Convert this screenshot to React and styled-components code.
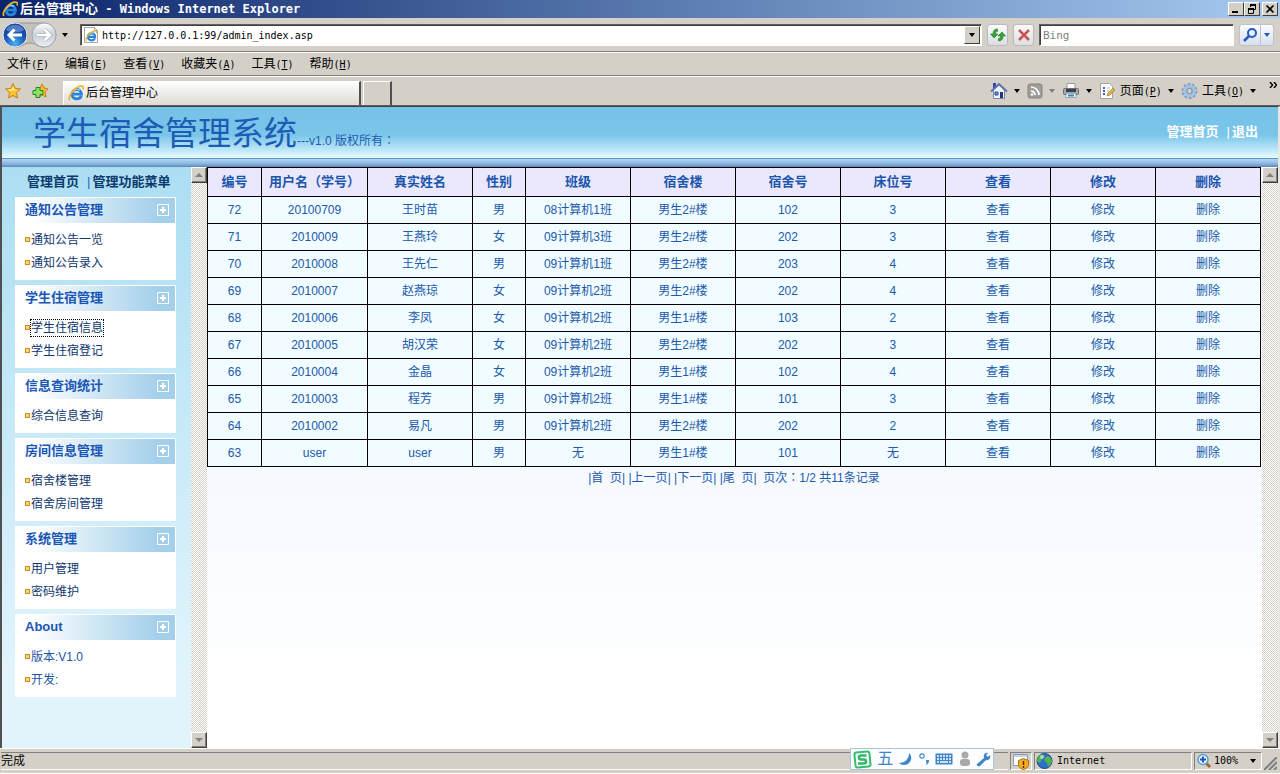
import React from 'react'
import styled, { createGlobalStyle } from 'styled-components'

const students = [
  ['72', '20100709', '王时苗', '男', '08计算机1班', '男生2#楼', '102', '3'],
  ['71', '2010009', '王燕玲', '女', '09计算机3班', '男生2#楼', '202', '3'],
  ['70', '2010008', '王先仁', '男', '09计算机1班', '男生2#楼', '203', '4'],
  ['69', '2010007', '赵燕琼', '女', '09计算机2班', '男生2#楼', '202', '4'],
  ['68', '2010006', '李凤', '女', '09计算机2班', '男生1#楼', '103', '2'],
  ['67', '2010005', '胡汉荣', '女', '09计算机2班', '男生2#楼', '202', '3'],
  ['66', '2010004', '金晶', '女', '09计算机2班', '男生1#楼', '102', '4'],
  ['65', '2010003', '程芳', '男', '09计算机2班', '男生1#楼', '101', '3'],
  ['64', '2010002', '易凡', '男', '09计算机2班', '男生2#楼', '202', '2'],
  ['63', 'user', 'user', '男', '无', '男生1#楼', '101', '无'],
]

// name and share of the table width
const columns = [
  ['编号', 54], ['用户名（学号）', 106], ['真实姓名', 105], ['性别', 53], ['班级', 105], ['宿舍楼', 105],
  ['宿舍号', 105], ['床位号', 105], ['查看', 105], ['修改', 105], ['删除', 105],
]
const totalWidth = columns.reduce((sum, [, width]) => sum + width, 0)

const groups = [
  { title: '通知公告管理', items: ['通知公告一览', '通知公告录入'] },
  { title: '学生住宿管理', items: ['学生住宿信息', '学生住宿登记'] },
  { title: '信息查询统计', items: ['综合信息查询'] },
  { title: '房间信息管理', items: ['宿舍楼管理', '宿舍房间管理'] },
  { title: '系统管理', items: ['用户管理', '密码维护'] },
]

const menus = [['文件', 'F'], ['编辑', 'E'], ['查看', 'V'], ['收藏夹', 'A'], ['工具', 'T'], ['帮助', 'H']]

export default function App() {
  return (
    <Window>
      <GlobalStyle />
      <TitleBar>
        <IeIcon size={16} />
        <Caption>后台管理中心<b> - Windows Internet Explorer</b></Caption>
        <WinButton aria-label="最小化"><svg width="14" height="12"><path d="M3 8h6v2H3z" /></svg></WinButton>
        <WinButton aria-label="还原">
          <svg width="14" height="12" fill="none" stroke="#000"><path d="M5 1.500h6M5 2.500h6M5.500 1v3M10.500 1v5.500H8M3 5.500h6M3 6.500h6M3.500 5v5.500h5V5" /></svg>
        </WinButton>
        <WinButton $apart aria-label="关闭">
          <svg width="14" height="12" stroke="#000" strokeWidth="1.700"><path d="M3.500 2.500l7 7M10.500 2.500l-7 7" /></svg>
        </WinButton>
      </TitleBar>

      <NavBar>
        <NavButtons>
          <svg width="58" height="30" viewBox="0 0 58 30">
            <defs>
              <radialGradient id="back" cx=".5" cy=".85" r=".85"><stop offset="0" stopColor="#48b4f4" /><stop offset=".5" stopColor="#1c57b8" /><stop offset="1" stopColor="#12388c" /></radialGradient>
              <linearGradient id="fwd" x2="0" y2="1"><stop offset="0" stopColor="#fff" /><stop offset=".5" stopColor="#c8ced8" /><stop offset="1" stopColor="#eef2f6" /></linearGradient>
            </defs>
            <path d="M15 3h28a12 12 0 0 1 0 24c-7 0-8-4-14-4s-7 4-14 4a12 12 0 0 1 0-24z" fill="#c4c1bc" stroke="#98948e" />
            <circle cx="14" cy="15" r="12" fill="url(#back)" stroke="#e4edf8" />
            <path d="M5 10c3-7 15-7 18 0-5 3-13 3-18 0z" fill="#7ba4dd" opacity=".6" />
            <path d="M21 15H9M13.500 9.500L8 15l5.500 5.500" fill="none" stroke="#fff" strokeWidth="3" />
            <circle cx="43" cy="15" r="12" fill="url(#fwd)" stroke="#a2a8b2" />
            <path d="M36 15h12M43.500 9.500L49 15l-5.500 5.500" fill="none" stroke="#a9b0bb" strokeWidth="4" />
            <path d="M36 15h12M43.500 9.500L49 15l-5.500 5.500" fill="none" stroke="#fff" strokeWidth="2.500" />
          </svg>
          <Arrow />
        </NavButtons>
        <AddressBox>
          <svg width="16" height="18" viewBox="0 0 16 18"><path d="M1.500 1.500h10l3 3v12h-13z" fill="#fff" stroke="#a8a8a8" /><path d="M11.500 1.500v3h3" fill="none" stroke="#a8a8a8" /></svg>
          <PageMark><IeIcon size={12} /></PageMark>
          <TextInput aria-label="地址" defaultValue="http://127.0.0.1:99/admin_index.asp" />
          <DropButton aria-label="地址列表"><Arrow /></DropButton>
        </AddressBox>
        <SoftButton aria-label="刷新">
          <svg width="16" height="16" viewBox="0 0 16 16" fill="#35a337" stroke="#1f7d28" strokeWidth=".6"><path d="M7.500 2v2.500C6 4.500 5.500 5 5.500 7H8l-4 4-3.500-4H3c0-3.500 1.500-5 4.500-5z" /><path d="M8.500 14v-2.500c1.500 0 2-.5 2-2.500H8l4-4 3.500 4H13c0 3.500-1.500 5-4.500 5z" /></svg>
        </SoftButton>
        <SoftButton aria-label="停止">
          <svg width="16" height="16" viewBox="0 0 16 16" stroke="#c85454" strokeWidth="2.500"><path d="M3 3l10 10M13 3L3 13" /></svg>
        </SoftButton>
        <SearchBox>
          <TextInput aria-label="搜索" placeholder="Bing" />
        </SearchBox>
        <SearchButtons>
          <button aria-label="搜索">
            <svg width="16" height="16" viewBox="0 0 16 16" fill="none" stroke="#2558c4" strokeWidth="2"><circle cx="10" cy="6" r="4" fill="#e6f1ff" /><path d="M7 9l-5 5" strokeWidth="2.500" /></svg>
          </button>
          <button aria-label="搜索选项"><Arrow $color="#2558c4" /></button>
        </SearchButtons>
      </NavBar>

      <MenuBar>
        {menus.map(([name, key]) => (
          <button key={key}>{name}<Latin>(<u>{key}</u>)</Latin></button>
        ))}
      </MenuBar>

      <TabBar>
        <IconButton aria-label="收藏中心"><Star /></IconButton>
        <IconButton aria-label="添加到收藏夹"><Star plus /></IconButton>
        <Tab><IeIcon size={16} />后台管理中心</Tab>
        <NewTab aria-label="新选项卡" />
        <Tools>
          <Tool aria-label="主页">
            <svg width="18" height="18" viewBox="0 0 18 18"><path d="M3 1h3v5H3z" fill="#3648b0" /><path d="M3.500 8v8.500h11V8L9 3z" fill="#eef2fa" stroke="#7b8dac" /><path d="M1 9.500L9 2l8 7.500" fill="none" stroke="#5f74a8" strokeWidth="2" /><path d="M5 10h3v3H5z" fill="#54a0dc" stroke="#334c9c" /><path d="M10 10h3v6h-3z" fill="#26337c" /></svg>
            <Arrow />
          </Tool>
          <Tool aria-label="源">
            <svg width="16" height="16" viewBox="0 0 16 16"><rect x="1" y="1" width="14" height="14" rx="2" fill="#a09e99" stroke="#85837e" /><path d="M4 4a8 8 0 0 1 8 8M4 8a4 4 0 0 1 4 4" fill="none" stroke="#fff" strokeWidth="1.700" /><circle cx="5" cy="11.500" r="1.300" fill="#fff" /></svg>
            <Arrow $color="#808080" />
          </Tool>
          <Tool aria-label="打印">
            <svg width="18" height="18" viewBox="0 0 18 18"><path d="M5 1.500h8V7H5z" fill="#fff" stroke="#999" /><rect x="1.500" y="6.500" width="15" height="6" rx="1" fill="#a4a6ae" stroke="#6e7078" /><path d="M4 7h10v3H4z" fill="#3c3e48" /><path d="M4.500 11.500h9l1 4h-11z" fill="#f3f8ff" stroke="#9aa" /><path d="M6 13.500h6" stroke="#3a80c8" strokeWidth="2" /></svg>
            <Arrow />
          </Tool>
          <Tool>
            <svg width="17" height="18" viewBox="0 0 17 18"><path d="M1.500 1.500h9l3 3v12h-12z" fill="#fff" stroke="#a3a3a8" /><path d="M4 6h2M4 9h2M4 12h2" stroke="#3d62c4" strokeWidth="2" /><path d="M8 6h3M8 9h2" stroke="#9bb6e4" /><path d="M8 14l1-3 5-5 2 2-5 5z" fill="#e2b24c" stroke="#a87a30" strokeWidth=".7" /></svg>
            <span>页面<Latin>(<u>P</u>)</Latin></span>
            <Arrow />
          </Tool>
          <Tool>
            <svg width="17" height="18" viewBox="0 0 17 18" fill="none"><circle cx="8.500" cy="9" r="7" stroke="#7d9fc1" strokeWidth="2" strokeDasharray="3 1.400" /><circle cx="8.500" cy="9" r="4.500" stroke="#a3c0dc" strokeWidth="4" /><circle cx="8.500" cy="9" r="2.700" fill="#d4d0c8" stroke="#6d8db1" /></svg>
            <span>工具<Latin>(<u>O</u>)</Latin></span>
            <Arrow />
          </Tool>
          <More aria-label="更多">
            <svg width="8" height="6" fill="none" stroke="#000" strokeWidth="1.500"><path d="M1 0l2.500 3L1 6M5 0l2.500 3L5 6" /></svg>
          </More>
        </Tools>
      </TabBar>

      <Page>
        <Banner>
          <h1>学生宿舍管理系统</h1>
          <small>---v1.0 版权所有<Punct>：</Punct></small>
          <nav><a href="#home">管理首页</a><span>|</span><a href="#exit">退出</a></nav>
        </Banner>
        <Frames>
          <Sidebar>
            <SideTop><a href="#home">管理首页</a><span>|</span><a href="#menu">管理功能菜单</a></SideTop>
            {groups.map(group => (
              <Group key={group.title}>
                <GroupTitle>{group.title}<Plus /></GroupTitle>
                <ul>
                  {group.items.map(item => (
                    <li key={item}><MenuLink href="#list" $focused={item === '学生住宿信息'}>{item}</MenuLink></li>
                  ))}
                </ul>
              </Group>
            ))}
            <Group>
              <GroupTitle>About<Plus /></GroupTitle>
              <ul>
                <li>版本:V1.0</li>
                <li>开发:</li>
              </ul>
            </Group>
          </Sidebar>
          <Scroll />
          <Main>
            <Table>
              <colgroup>
                {columns.map(([name, width]) => <Col key={name} $width={width} />)}
              </colgroup>
              <thead>
                <tr>{columns.map(([name]) => <th key={name}>{name}</th>)}</tr>
              </thead>
              <tbody>
                {students.map(row => (
                  <tr key={row[0]}>
                    {row.map((cell, i) => <td key={i}>{cell}</td>)}
                    <td><a href="#view">查看</a></td>
                    <td><a href="#edit">修改</a></td>
                    <td><a href="#delete">删除</a></td>
                  </tr>
                ))}
              </tbody>
            </Table>
            <Pager>
              |<a href="#first">首&nbsp; 页</a>| |<a href="#prev">上一页</a>| |<a href="#next">下一页</a>| |<a href="#last">尾&nbsp; 页</a>|&nbsp; 页次<Punct>：</Punct>1/2 共11条记录
            </Pager>
          </Main>
          <Scroll />
        </Frames>
      </Page>

      <StatusBar>
        <StatusText>完成</StatusText>
        <StatusPane $width={22}>
          <svg width="18" height="18" viewBox="0 0 18 18"><path d="M1.500 2.500h14v11h-14z" fill="#fff" stroke="#8b9bb4" /><path d="M2 3h13v2H2z" fill="#c7d3e6" /><path d="M11.500 6.500l5 2v4c0 3-3 4.500-5 5-2-.5-5-2-5-5v-4z" fill="#f2b01e" stroke="#b26a10" /><path d="M11.500 9v4M11.500 14v2" stroke="#5a2b00" strokeWidth="1.500" /></svg>
        </StatusPane>
        <StatusPane $width={158}>
          <svg width="17" height="16" viewBox="0 0 17 16"><circle cx="8.500" cy="8" r="7.500" fill="#2f6fce" stroke="#1c458c" /><path d="M3 3c3-3 6-1 5 1S5 6 5 8s-2 2-4 0c0-2 1-4 2-5zM10 4c3-2 5 1 6 4-1 4-3 6-4 5s0-3-2-4-2-4 0-5z" fill="#4fb64a" /><circle cx="6" cy="4" r="2" fill="#dff3ff" opacity=".6" /></svg>
          <Latin>Internet</Latin>
        </StatusPane>
        <StatusPane $width={68} $last>
          <svg width="16" height="16" viewBox="0 0 16 16"><path d="M9 9l5 5" stroke="#a56a30" strokeWidth="3" /><circle cx="7" cy="6.500" r="5" fill="#eaf5ff" stroke="#5e9bd6" strokeWidth="1.500" /><path d="M4 6.500h6M7 3.500v6" stroke="#1f54ba" strokeWidth="2" /></svg>
          <Latin>100%</Latin>
          <Arrow />
        </StatusPane>
        <Grip width="13" height="13" stroke="#808080" strokeWidth="2"><path d="M0 13L13 0M5 13l8-8M10 13l3-3" /></Grip>
        <ImeBar>
          <svg width="19" height="19" viewBox="0 0 19 19"><rect x="2" y="2" width="15" height="15" rx="2" fill="#fff" stroke="#35bd6c" strokeWidth="2" transform="rotate(-6 9.500 9.500)" /><path d="M13.500 5.500H8a2 2 0 0 0 0 4h3a2 2 0 0 1 0 4H5" fill="none" stroke="#2fb866" strokeWidth="2.600" /></svg>
          <ImeMode>五</ImeMode>
          <svg width="14" height="14" viewBox="0 0 14 14"><path d="M10 1c5 5 1 12-5 12-2 0-4-1-5-2 6 0 10-4 10-10z" fill="#3f86c9" /></svg>
          <svg width="12" height="14" viewBox="0 0 12 14"><circle cx="4" cy="4" r="2.200" fill="none" stroke="#3f86c9" strokeWidth="1.200" /><path d="M8 8h3c0 3-1 4-3 5 1-2 0-3 0-5z" fill="#3f86c9" /></svg>
          <svg width="18" height="12" viewBox="0 0 18 12"><rect x=".5" y=".5" width="17" height="11" fill="#3f86c9" /><path d="M2 3h14M2 6h14" stroke="#fff" strokeWidth="1.500" strokeDasharray="2 1" /><path d="M2 9h2M5 9h8M14 9h2" stroke="#fff" strokeWidth="1.500" /></svg>
          <svg width="12" height="16" viewBox="0 0 12 16" fill="#a9a9a9"><circle cx="6" cy="4" r="3.500" /><rect x="1" y="8" width="10" height="7" rx="3" /></svg>
          <svg width="15" height="15" viewBox="0 0 15 15"><path d="M1 12l7-6c-1-3 1-6 4-5L10 3l2 2 2-2c1 3-1 6-4 5l-6 6c-2 1-4-1-3-2z" fill="#3f86c9" /></svg>
        </ImeBar>
      </StatusBar>
    </Window>
  )
}

function IeIcon({ size }) {
  return (
    <svg width={size} height={size} viewBox="0 0 16 16" fill="none">
      <path d="M13.500 11c-2.500 4.500-9.500 3.500-9.500-2s9-6.500 9.500.2H5" stroke="#2a83dc" strokeWidth="2.800" />
      <path d="M12 5.500C10 3.500 6 4 5 7" stroke="#7fd0fa" strokeWidth="1.200" />
      <path d="M2 15C-1 11 9-1 15 1.500c1 1 .5 2 0 3" stroke="#f0b428" strokeWidth="1.700" />
    </svg>
  )
}

function Star({ plus }) {
  return (
    <svg width="18" height="18" viewBox="0 0 18 18">
      <path d={plus ? 'M11 2l2 4 4 1-3 3 1 5-4-2-4 2V7l2-1z' : 'M9 1.500l2.200 4.800 5.300.7-4 3.500 1 5.500L9 13.500 4.500 16l1-5.500-4-3.500 5.300-.7z'} fill="#fbc32c" stroke="#cc7d14" />
      {!plus && <path d="M9 4l1.500 3.500 3 .5-8 1-2-1.500 4-.5z" fill="#ffe98c" />}
      {plus && <path d="M5 5.500h4v3h3v4H9v3H5v-3H2v-4h3z" fill="#8ee06a" stroke="#23881f" />}
    </svg>
  )
}

function Plus() {
  return (
    <PlusButton aria-label="展开">
      <svg width="12" height="12" fill="none" stroke="#fff"><path d="M.5.5h11v11H.5z" /><path d="M6 3v6M3 6h6" strokeWidth="2" /></svg>
    </PlusButton>
  )
}

function Scroll() {
  return (
    <ScrollBar>
      <button aria-label="向上滚动"><svg width="8" height="4"><path d="M4 0l4 4H0z" fill="#808080" /></svg></button>
      <button aria-label="向下滚动"><svg width="8" height="4"><path d="M0 0h8L4 4z" fill="#808080" /></svg></button>
    </ScrollBar>
  )
}

const GlobalStyle = createGlobalStyle`
  * {
    box-sizing: border-box;
  }

  body {
    margin: 0;
    background: #d4d0c8;
    color: #000;
    font: 12px/16px "Liberation Sans", "Noto Sans CJK SC", sans-serif;
  }

  button, input {
    margin: 0;
    padding: 0;
    border: 0;
    background: none;
    color: inherit;
    font: inherit;
  }

  a {
    color: inherit;
    text-decoration: none;
  }

  ul {
    margin: 0;
    padding: 0;
    list-style: none;
  }

  svg {
    display: block;
    flex: none;
  }
`

const Window = styled.div`
  min-height: 100vh;
  display: flex;
  flex-direction: column;
`

const TitleBar = styled.header`
  height: 18px;
  padding: 0 2px;
  display: flex;
  align-items: center;
  background: linear-gradient(90deg, #0a246a, #a6caf0);
  color: #fff;
`

const Caption = styled.div`
  flex: 1;
  padding-left: 2px;
  font-size: 13px;
  font-weight: bold;
  white-space: pre;

  & > b {
    font-family: "DejaVu Sans Mono", monospace;
    font-size: 12px;
  }
`

const WinButton = styled.button`
  width: 16px;
  height: 14px;
  margin-left: ${props => (props.$apart ? '2px' : '0')};
  background: #d4d0c8;
  border: 1px solid;
  border-color: #fff #404040 #404040 #fff;
`

const NavBar = styled.div`
  height: 34px;
  padding: 0 6px 0 1px;
  display: flex;
  align-items: center;
  gap: 5px;
  border-bottom: 1px solid #808080;
`

const NavButtons = styled.div`
  width: 74px;
  display: flex;
  align-items: center;
  gap: 3px;
`

const Arrow = styled.i`
  flex: none;
  border: solid transparent;
  border-width: 4px 3px 0;
  border-top-color: ${props => props.$color || '#000'};
`

const sunken = `
  border: 1px solid;
  border-color: #606060 #fff #fff #606060;
  box-shadow: inset 1px 1px #404040;
  background: #fff;
`

const AddressBox = styled.div`
  ${sunken}
  position: relative;
  flex: 1;
  height: 22px;
  padding: 2px 1px 2px 2px;
  display: flex;
  align-items: center;
`

/* browser mark laid over the sheet icon */
const PageMark = styled.span`
  position: absolute;
  left: 4px;
  top: 5px;
`

const TextInput = styled.input`
  flex: 1;
  min-width: 0;
  padding: 2px 3px 0;
  font: 10px/14px "DejaVu Sans Mono", monospace;
  outline: 0;

  &::placeholder {
    color: #808080;
    font-size: 11px;
    opacity: 1;
  }
`

const DropButton = styled.button`
  width: 16px;
  height: 18px;
  display: flex;
  align-items: center;
  justify-content: center;
  background: #d4d0c8;
  border: 1px solid;
  border-color: #fff #404040 #404040 #fff;
`

const SoftButton = styled.button`
  width: 21px;
  height: 22px;
  display: flex;
  align-items: center;
  justify-content: center;
  background: linear-gradient(#fafafc, #dcdde2);
  border: 1px solid #bcbac0;
  border-radius: 3px;
`

const SearchBox = styled.div`
  ${sunken}
  width: 195px;
  height: 22px;
  display: flex;
  align-items: center;
`

const SearchButtons = styled.div`
  height: 22px;
  display: flex;
  background: linear-gradient(#fafcff, #d8dfee);
  border: 1px solid #bcc2d0;
  border-radius: 3px;

  & > button {
    width: 20px;
    display: flex;
    align-items: center;
    justify-content: center;
  }

  & > button + button {
    width: 13px;
    border-left: 1px solid #bcc2d0;
  }
`

const Latin = styled.span`
  font: 10px/14px "DejaVu Sans Mono", monospace;
`

/* full-width colon set in the middle of its square */
const Punct = styled.span`
  font-family: "Noto Sans CJK TC", sans-serif;
  line-height: 1;
`

const MenuBar = styled.nav`
  height: 24px;
  padding: 0 7px;
  display: flex;
  align-items: center;
  gap: 16px;
  border-top: 1px solid #fff;
  border-bottom: 1px solid #808080;
`

const TabBar = styled.div`
  height: 30px;
  padding: 4px 3px 0 4px;
  display: flex;
  align-items: stretch;
  border-top: 1px solid #fff;
  border-bottom: 1px solid #606060;
`

const IconButton = styled.button`
  width: 27px;
  padding-bottom: 4px;
`

const Tab = styled.button`
  width: 298px;
  margin-left: 5px;
  padding: 0 4px 2px;
  display: flex;
  align-items: center;
  gap: 2px;
  background: linear-gradient(#fdfdfc, #dedbd5);
  border: solid;
  border-width: 1px 2px 0 1px;
  border-color: #fff #505050 #fff #fff;
`

const NewTab = styled.button`
  width: 29px;
  margin-left: 2px;
  border: solid;
  border-width: 1px 2px 0 1px;
  border-color: #fff #505050 #fff #fff;
`

const Tools = styled.div`
  margin-left: auto;
  padding-bottom: 4px;
  display: flex;
  align-items: center;
  gap: 7px;
`

const Tool = styled.button`
  display: flex;
  align-items: center;
  gap: 6px;

  & > svg + span {
    margin-left: -2px;
  }
`

const More = styled.button`
  align-self: flex-start;
  margin-left: 6px;
  padding: 1px 0;
`

const Page = styled.div`
  flex: 1;
  display: flex;
  flex-direction: column;
  border: solid;
  border-width: 1px 2px 0 2px;
  border-color: #404040 #e8e6e0 #fff #505050;
`

const Banner = styled.header`
  height: 60px;
  padding: 0 20px 0 31px;
  display: flex;
  align-items: flex-start;
  background: linear-gradient(#76c1e8 0, #7ac5e9 28px, #c2eaf9 44px, #e8faff 51px, #5c97cb 51px, #5c97cb 52px, #b2d8f5 52px, #86b4e0 57px, #5a86b4 60px);
  color: #1c5cb4;

  & > h1 {
    margin: 0;
    font-size: 33px;
    font-weight: 400;
    line-height: 54px;
  }

  & > small {
    padding-top: 26px;
    font-size: 12px;
  }

  & > nav {
    margin-left: auto;
    padding-top: 17px;
    color: #fff;
    font-size: 13px;
    font-weight: bold;
  }

  & > nav > span {
    padding: 0 2px 0 8px;
    font-weight: normal;
  }
`

const Frames = styled.div`
  flex: 1;
  display: flex;
`

const Sidebar = styled.aside`
  width: 189px;
  padding: 0 15px 40px 13px;
  display: flex;
  flex-direction: column;
  gap: 5px;
  background: linear-gradient(#acdef3, #e1f4fc 500px);
  color: #1d55a5;
`

const SideTop = styled.div`
  height: 25px;
  padding: 7px 0 0 12px;
  color: #0c3a6c;
  font-size: 13px;
  font-weight: bold;
  white-space: nowrap;

  & > span {
    padding: 0 2px 0 8px;
    color: #2c66ba;
    font-weight: normal;
  }
`

const Group = styled.section`
  padding-top: 1px;
  background: #fff;

  & > ul {
    padding: 5px 10px 6px;
  }

  & li {
    height: 23px;
    display: flex;
    align-items: center;
    gap: 1px;
  }

  & li::before {
    content: '';
    width: 5px;
    height: 5px;
    border: 1px solid #d98a1c;
    background: #ffd873;
    box-sizing: border-box;
  }
`

const GroupTitle = styled.h2`
  height: 25px;
  margin: 0 1px 0 0;
  padding: 0 6px 2px 10px;
  display: flex;
  align-items: center;
  justify-content: space-between;
  background: linear-gradient(90deg, #fff 10%, #a3cfeb 90%);
  color: #1b57b5;
  font-size: 13px;
`

const PlusButton = styled.button`
  width: 12px;
  height: 12px;
`

const MenuLink = styled.a`
  color: #0e366e;
  outline: ${props => (props.$focused ? '1px dotted #000' : '0')};
`

const ScrollBar = styled.div`
  width: 16px;
  display: flex;
  flex-direction: column;
  justify-content: space-between;
  background: repeating-conic-gradient(#d4d0c8 0 25%, #fff 0 50%) 0 0 / 2px 2px;

  & > button {
    height: 16px;
    display: flex;
    align-items: center;
    justify-content: center;
    background: #d4d0c8;
    border: 1px solid;
    border-color: #fff #404040 #404040 #fff;
    box-shadow: inset -1px -1px #808080;
  }
`

const Main = styled.main`
  flex: 1;
  padding-right: 1px;
  background: linear-gradient(#f0f7ff, #f6faff 310px, #fff 530px);
  color: #2159ab;
`

const Table = styled.table`
  width: 100%;
  table-layout: fixed;
  border-collapse: collapse;
  background: #f0fcff;
  text-align: center;

  & th, & td {
    height: 27px;
    padding: 0;
    border: 1px solid #000;
  }

  & th {
    height: 29px;
    background: #ebe8fd;
    color: #1b56ad;
    font-size: 13px;
    white-space: nowrap;
  }
`

const Col = styled.col`
  width: ${props => (props.$width / totalWidth) * 100}%;
`

const Pager = styled.div`
  padding-top: 3px;
  text-align: center;
`

const StatusBar = styled.footer`
  position: relative;
  height: 26px;
  padding: 3px 3px 3px 1px;
  display: flex;
  gap: 2px;
  border-top: 1px solid #fff;
  border-bottom: 1px solid #fff;
`

const StatusText = styled.div`
  flex: 1;
  border-top: 1px solid #808080;
  border-bottom: 1px solid #fff;
`

const StatusPane = styled.div`
  width: ${props => props.$width}px;
  padding-left: 1px;
  display: flex;
  align-items: center;
  gap: ${props => (props.$last ? '2px' : '4px')};
  border: 1px solid;
  border-color: #808080 #fff #fff #808080;

  & > i {
    margin-left: 10px;
  }
`

const Grip = styled.svg`
  align-self: flex-end;
`

/* floating input method toolbar, sits over the status bar */
const ImeBar = styled.div`
  position: absolute;
  right: 286px;
  top: -1px;
  width: 144px;
  height: 22px;
  padding: 0 2px;
  display: flex;
  align-items: center;
  justify-content: space-between;
  background: #fbfdff;
  border: 1px solid #a9c4dc;
`

const ImeMode = styled.span`
  color: #3f86c9;
  font-size: 16px;
`
